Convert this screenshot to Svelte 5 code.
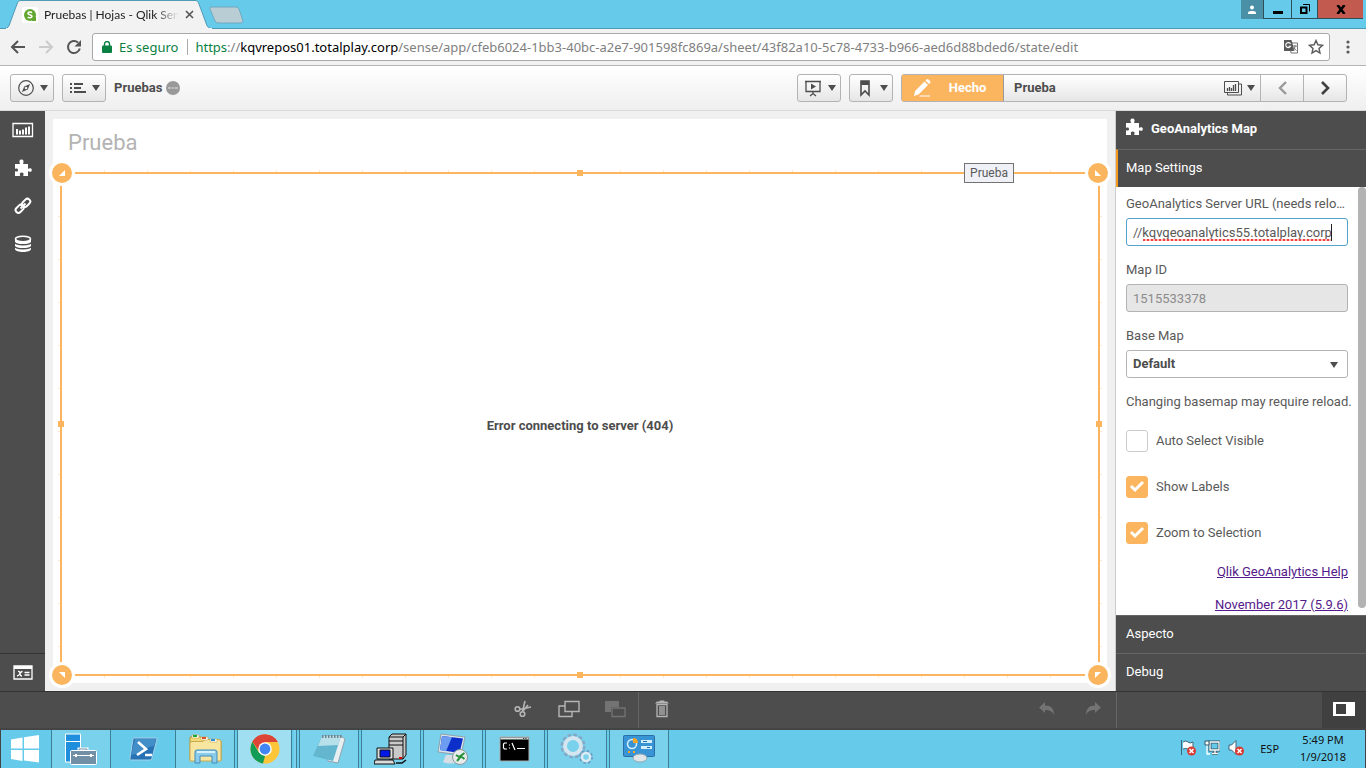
<script lang="ts">
  let serverUrl = '//kqvgeoanalytics55.totalplay.corp';
  let mapId = '1515533378';
  let baseMap = 'Default';

  let options = [
    { id: 'auto-select', label: 'Auto Select Visible', checked: false },
    { id: 'show-labels', label: 'Show Labels', checked: true },
    { id: 'zoom-selection', label: 'Zoom to Selection', checked: true }
  ];

  const assets = ['charts', 'puzzle', 'link', 'database'];
  const corners = ['tl', 'tr', 'bl', 'br'];
  const sides = ['top', 'right', 'bottom', 'left'];
  const apps = ['remote', 'rdp', 'cmd', 'gears', 'control'];
</script>

{#snippet caret()}
  <svg class="caret" width="8" height="6" viewBox="0 0 8 6"><path d="M0 0h8L4 6z" fill="#4d4d4d" /></svg>
{/snippet}

{#snippet puzzle()}
  <svg width="18" height="18" viewBox="0 0 18 18" fill="#fff">
    <path d="M1 5h4.500c.6 0 .6-.6.200-1.200C5 2.500 5.400.5 7.500.5s2.500 2 1.800 3.300C9 4.400 9 5 9.600 5H14v4.200c0 .7.600.7 1.100.300 1.100-.8 2.700-.3 2.700 1.500s-1.600 2.300-2.700 1.500c-.5-.4-1.100-.3-1.100.4V17H9.700c-.7 0-.6-.7-.3-1.200.6-1-.1-2.300-1.700-2.300s-2.300 1.300-1.700 2.300c.3.500.3 1.200-.4 1.200H1v-4.300c0-.6.500-.6 1-.3 1 .6 2-.2 2-1.400S3 9 2 9.600c-.5.300-1 .3-1-.3z" />
  </svg>
{/snippet}

{#snippet badge()}
  <circle cx="11.500" cy="12" r="4.500" fill="#d93a32" />
  <path d="M9.500 10l4 4M13.500 10l-4 4" stroke="#fff" stroke-width="1.500" />
{/snippet}

<div class="screen">
  <header class="titlebar">
    <div class="tab">
      <svg class="tab-shape" width="208" height="29" viewBox="0 0 208 29">
        <path d="M0 28.500C3 28.500 4 26 5 23L12 4C13 1.500 14 .5 16 .5H190c2 0 3 1 4 3.500l7 19c1 3 2 5.500 6 5.500z" fill="#f2f2f2" stroke="#4d9ab5" />
        <path d="M1 28.500h206" stroke="#f2f2f2" />
      </svg>
      <svg class="favicon" width="16" height="16" viewBox="0 0 16 16">
        <rect width="16" height="16" rx="2" fill="#fff" />
        <circle cx="8" cy="8" r="6" fill="#61a730" />
        <path d="M10 10h4v4h-4z" fill="#61a730" />
        <path d="M10 5.800C9.200 4.800 6 4.600 6 6.400c0 1.700 4 1 4 2.900 0 1.900-3.300 1.700-4.200.6" fill="none" stroke="#fff" stroke-width="1.600" />
      </svg>
      <span class="tab-title">Pruebas | Hojas - Qlik Sen</span>
      <button class="tab-close" aria-label="Cerrar pestaña">
        <svg width="9" height="9" viewBox="0 0 9 9"><path d="M1 1l7 7M8 1L1 8" stroke="#555" stroke-width="1.600" /></svg>
      </button>
    </div>
    <button class="new-tab" aria-label="Nueva pestaña">
      <svg width="36" height="18" viewBox="0 0 36 18"><path d="M3 1h25q2 0 3 2l4 12q0 2-2 2H10q-2 0-3-2L2 3q-1-2 1-2z" fill="#b9cdd5" stroke="#70a9bf" /></svg>
    </button>
    <div class="window-buttons">
      <button class="profile" aria-label="Perfil">
        <svg width="10" height="10" viewBox="0 0 10 10" fill="#fff"><circle cx="5" cy="2.500" r="2" /><path d="M1 9V7.500C1 5.500 9 5.500 9 7.500V9z" /></svg>
      </button>
      <button class="min" aria-label="Minimizar"><svg width="10" height="10" viewBox="0 0 10 10"><path d="M0 7h10v3H0z" /></svg></button>
      <button class="restore" aria-label="Restaurar">
        <svg width="10" height="10" viewBox="0 0 10 10" fill="none" stroke="#000"><path d="M1 3.500h5.500v5.500H1z" stroke-width="2" /><path d="M3 .5h6.500v7" /></svg>
      </button>
      <button class="close" aria-label="Cerrar">
        <svg width="10" height="9" viewBox="0 0 10 9"><path d="M1.500 0l7 9M8.500 0l-7 9" stroke="#000" stroke-width="2.600" /></svg>
      </button>
    </div>
  </header>

  <nav class="browser-bar">
    <button aria-label="Atrás">
      <svg width="16" height="16" viewBox="0 0 16 16" fill="none" stroke="#555" stroke-width="2"><path d="M15 8H2.500M8 2L2 8l6 6" /></svg>
    </button>
    <button aria-label="Adelante">
      <svg width="16" height="16" viewBox="0 0 16 16" fill="none" stroke="#ccc" stroke-width="2"><path d="M1 8h12.500M8 2l6 6-6 6" /></svg>
    </button>
    <button aria-label="Recargar">
      <svg width="16" height="16" viewBox="0 0 16 16"><path d="M13.800 9.500A6 6 0 1 1 12 3.600" fill="none" stroke="#555" stroke-width="2" /><path d="M15 1v6.500H8.500z" fill="#555" /></svg>
    </button>
    <div class="omnibox">
      <svg width="10" height="12" viewBox="0 0 10 12"><rect y="4.500" width="10" height="7.500" rx="1" fill="#0b8043" /><path d="M2.500 5V3a2.500 2.500 0 0 1 5 0v2" fill="none" stroke="#0b8043" stroke-width="1.400" /></svg>
      <span class="secure">Es seguro</span>
      <span class="url"><span class="scheme">https</span>://<span class="host">kqvrepos01.totalplay.corp</span>/sense/app/cfeb6024-1bb3-40bc-a2e7-901598fc869a/sheet/43f82a10-5c78-4733-b966-aed6d88bded6/state/edit</span>
      <button aria-label="Traducir">
        <svg width="16" height="16" viewBox="0 0 16 16">
          <path d="M7 4h7.500v10H8z" fill="#fff" stroke="#777" />
          <path d="M1 1h7.500l3 11H1z" fill="#5a5a5a" />
          <path d="M7.500 5A2.500 2.500 0 1 0 7.500 7.200H5.500" fill="none" stroke="#fff" stroke-width="1.100" />
          <path d="M10 7h4M12 6v1.500q-.5 3-2 4M11 8.500q1 2 2.500 3" fill="none" stroke="#777" />
        </svg>
      </button>
      <button aria-label="Agregar a favoritos">
        <svg width="16" height="16" viewBox="0 0 16 16"><path d="M8 1.500l1.900 4.300 4.600.5-3.500 3.100 1 4.600L8 11.600 4 14l1-4.600L1.500 6.300l4.600-.5z" fill="none" stroke="#5a5a5a" stroke-width="1.400" /></svg>
      </button>
    </div>
    <button class="more" aria-label="Menú">
      <svg width="4" height="14" viewBox="0 0 4 14" fill="#5a5a5a"><circle cx="2" cy="2" r="1.600" /><circle cx="2" cy="7" r="1.600" /><circle cx="2" cy="12" r="1.600" /></svg>
    </button>
  </nav>

  <div class="app-bar">
    <button class="tool" aria-label="Navegación">
      <svg width="16" height="16" viewBox="0 0 16 16"><circle cx="8" cy="8" r="7.300" fill="none" stroke="#4d4d4d" stroke-width="1.200" /><path d="M12 4L9.800 9.500 4 12l2.200-5.600z" fill="#4d4d4d" /><circle cx="8" cy="8" r="1.300" fill="#eee" /></svg>
      {@render caret()}
    </button>
    <button class="tool" aria-label="Menú global">
      <svg width="16" height="12" viewBox="0 0 16 12" fill="#4d4d4d"><path d="M0 1h2v2H0zM0 5h2v2H0zM0 9h2v2H0zM4 1h9v2H4zM4 5h7v2H4zM4 9h12v2H4z" /></svg>
      {@render caret()}
    </button>
    <div class="app-name">
      Pruebas
      <svg width="14" height="14" viewBox="0 0 14 14"><circle cx="7" cy="7" r="7" fill="#999" /><path d="M2 7h3M5.800 7h2.500M9 7h3" stroke="#e4e4e4" /></svg>
    </div>
    <button class="tool push" aria-label="Historias">
      <svg width="18" height="18" viewBox="0 0 18 18" fill="none" stroke="#4d4d4d" stroke-width="1.300"><path d="M1 2.500h16M2 2.500v10h14v-10M9 12.500V15M6 17l3-2.500 3 2.500" /><path d="M7 4.500l5 3-5 3z" fill="#4d4d4d" stroke="none" /></svg>
      {@render caret()}
    </button>
    <button class="tool" aria-label="Marcadores">
      <svg width="18" height="18" viewBox="0 0 18 18"><path d="M5 2h8v14l-4-4-4 4z" fill="none" stroke="#4d4d4d" stroke-width="1.600" /><path d="M5 2h8v4H5z" fill="#4d4d4d" /></svg>
      {@render caret()}
    </button>
    <div class="sheet-group">
      <button class="edit">
        <svg width="18" height="18" viewBox="0 0 18 18" fill="#fff"><path d="M2 12L11.500 2.500l3.500 3.500L5.500 15.500 1 17zM12.500 1.500L13.500.5q1-1 2 0L17 2q1 1 0 2l-1 1z" /><path d="M7 16.500h10v1H6z" /></svg>
        Hecho
      </button>
      <button class="sheet-name">
        <span>Prueba</span>
        <svg width="18" height="16" viewBox="0 0 18 16" fill="none" stroke="#4d4d4d"><path d="M.5 1.500h14v11H.5z" /><path d="M15 4h2.500v11h-14v-2" /><path d="M3.500 11V8M5.500 11V7M7.500 11V8M9.500 11V5M11.500 11V4" stroke-width="1.300" /></svg>
        {@render caret()}
      </button>
      <button class="step" aria-label="Hoja anterior"><svg width="9" height="14" viewBox="0 0 9 14"><path d="M8 1L2 7l6 6" fill="none" stroke="#999" stroke-width="2.400" /></svg></button>
      <button class="step" aria-label="Hoja siguiente"><svg width="9" height="14" viewBox="0 0 9 14"><path d="M1 1l6 6-6 6" fill="none" stroke="#404040" stroke-width="2.600" /></svg></button>
    </div>
  </div>

  <div class="workspace">
    <aside class="assets">
      {#each assets as asset}
        <button aria-label={asset}>
          {#if asset === 'charts'}
            <svg width="22" height="16" viewBox="0 0 22 16"><path d="M1 1.500h19.500v13H1z" fill="none" stroke="#fff" stroke-width="1.300" /><path d="M4 7h2v5.500H4zM7 8.500h2v4H7zM10 7.500h2v5h-2zM13 5.500h2v7h-2zM16 4.500h2v8h-2z" fill="#fff" /></svg>
          {:else if asset === 'puzzle'}
            {@render puzzle()}
          {:else if asset === 'link'}
            <svg width="18" height="18" viewBox="0 0 18 18" fill="none" stroke="#fff" stroke-width="2"><rect x="-4" y="-2.800" width="9" height="5.600" rx="2.800" transform="translate(5.300 12.200) rotate(-45)" /><rect x="-4.500" y="-2.800" width="9" height="5.600" rx="2.800" transform="translate(12.200 5.800) rotate(-45)" /><path d="M6.500 11.500l5-5" /></svg>
          {:else}
            <svg width="18" height="18" viewBox="0 0 18 18"><path d="M1 4v10c0 4 16 4 16 0V4z" fill="#fff" /><ellipse cx="9" cy="4" rx="7.500" ry="2.800" fill="#4d4d4d" stroke="#fff" stroke-width="1.600" /><path d="M1 7.500c1 3 15 3 16 0M1 11.500c1 3 15 3 16 0" fill="none" stroke="#4d4d4d" stroke-width="1.300" /></svg>
          {/if}
        </button>
      {/each}
      <button class="variables" aria-label="Variables">
        <svg width="20" height="15" viewBox="0 0 20 15"><path d="M1 1h18v13H1z" fill="none" stroke="#fff" stroke-width="1.300" /><path d="M1 1h18v3H1z" fill="#fff" /><path d="M5 6.500q2-.5 2 2t2 2.500M9.500 6.500q-1.500 0-2.500 2T4 11M11.500 7.500h5M11.500 10h5" fill="none" stroke="#fff" stroke-width="1.300" /></svg>
      </button>
    </aside>

    <main class="stage">
      <section class="sheet">
        <h1>Prueba</h1>
        <div class="frame">
          <p class="message">Error connecting to server (404)</p>
          <div class="ticks across"></div>
          <div class="ticks down"></div>
          {#each sides as side}
            <span class="grip {side}"></span>
          {/each}
          {#each corners as corner}
            <span class="corner {corner}"><svg width="6" height="6" viewBox="0 0 6 6"><path d="M6 0v6H0z" fill="#fff" /></svg></span>
          {/each}
          <span class="frame-label">Prueba</span>
        </div>
      </section>
    </main>

    <aside class="panel">
      <div class="panel-title">{@render puzzle()}GeoAnalytics Map</div>
      <button class="section open">Map Settings</button>
      <div class="settings">
        <div class="field">
          <label for="server-url">GeoAnalytics Server URL (needs reload)</label>
          <div class="control">
            <input id="server-url" class="focused" type="text" bind:value={serverUrl} spellcheck="false" />
            <span class="misspelled"></span>
          </div>
        </div>
        <div class="field">
          <label for="map-id">Map ID</label>
          <input id="map-id" type="text" value={mapId} disabled />
        </div>
        <div class="field">
          <label for="base-map">Base Map</label>
          <div class="control">
            <select id="base-map" bind:value={baseMap}>
              <option>Default</option>
            </select>
            {@render caret()}
          </div>
        </div>
        <p class="note">Changing basemap may require reload.</p>
        <div class="checks">
          {#each options as option}
            <label for={option.id}>
              <input id={option.id} type="checkbox" bind:checked={option.checked} />
              <svg class="tick" width="22" height="22" viewBox="0 0 22 22"><path d="M5 10l4 4 8-8" fill="none" stroke="#fff" stroke-width="3" /></svg>
              {option.label}
            </label>
          {/each}
        </div>
        <div class="links">
          <a href="#help">Qlik GeoAnalytics Help</a>
          <a href="#version">November 2017 (5.9.6)</a>
        </div>
        <span class="scroll-thumb"></span>
      </div>
      <button class="section">Aspecto</button>
      <button class="section">Debug</button>
    </aside>
  </div>

  <footer class="edit-bar">
    <div class="edit-tools">
      <span class="lead"></span>
      <button aria-label="Cortar">
        <svg width="18" height="18" viewBox="0 0 18 18" fill="none" stroke="#b5b5b5" stroke-width="1.600"><circle cx="3.500" cy="9" r="2.300" /><circle cx="8.500" cy="14" r="2.300" /><path d="M5.500 9.500L17 7M8.500 11.500L11 1M9 11l5-6" /></svg>
      </button>
      <button aria-label="Copiar">
        <svg width="22" height="18" viewBox="0 0 22 18" fill="none" stroke="#b5b5b5" stroke-width="1.400"><path d="M7 1.500h14v10H7z" /><path d="M7 6H1v10.500h13v-5" /></svg>
      </button>
      <button aria-label="Pegar">
        <svg width="22" height="18" viewBox="0 0 22 18"><path d="M1 1h14v6H7v5H1z" fill="#737373" /><path d="M8 8h13v8.500H8z" fill="none" stroke="#737373" stroke-width="1.300" /></svg>
      </button>
      <button class="divided" aria-label="Eliminar">
        <svg width="14" height="18" viewBox="0 0 14 18"><path d="M0 3.500L2 1.500h2.500L5 .5h4l.5 1H12l2 2z" fill="#b5b5b5" /><path d="M2 4.500v12h10v-12zM5 6v9M7 6v9M9 6v9" fill="none" stroke="#b5b5b5" stroke-width="1.300" /></svg>
      </button>
      <span class="trail"></span>
      <button aria-label="Deshacer">
        <svg width="16" height="14" viewBox="0 0 16 14"><path d="M6 0v3.500c6 0 9 3 9 9.500-1.500-3.500-4-5-9-5V11L0 5.500z" fill="#737373" /></svg>
      </button>
      <button aria-label="Rehacer">
        <svg width="16" height="14" viewBox="0 0 16 14"><path d="M10 0v3.500c-6 0-9 3-9 9.500 1.500-3.500 4-5 9-5V11l6-5.500z" fill="#737373" /></svg>
      </button>
    </div>
    <div class="panel-tools">
      <button aria-label="Mostrar propiedades">
        <svg width="22" height="14" viewBox="0 0 22 14"><path d="M0 0h22v14H0z" fill="#fff" /><path d="M3 2h10v10H3z" fill="#404040" /></svg>
      </button>
    </div>
  </footer>

  <div class="taskbar">
    <button class="start" aria-label="Inicio">
      <svg width="28" height="28" viewBox="0 0 28 28" fill="#fff"><path d="M0 4.500L11.500 2.500v11H0zM13 2.200L28 0v13.500H13zM0 15h11.500v11L0 24zM13 15h15v12.500L13 25.500z" /></svg>
    </button>
    <button class="app server" aria-label="Administrador del servidor">
      <svg width="32" height="32" viewBox="0 0 32 32"><path d="M.5 1h15v28H.5z" fill="#1f8fdd" stroke="#fff" /><path d="M0 8.500h16" stroke="#fff" /><path d="M14 18v-2h8v2" fill="none" stroke="#fff" stroke-width="3" /><path d="M14 18v-2h8v2" fill="none" stroke="#7190a6" /><rect x="5.500" y="17.500" width="26" height="14" rx="1" fill="#7190a6" stroke="#fff" /><path d="M8 22.500h21" stroke="#fff" /><path d="M11 21v3M26 21v3" stroke="#fff" stroke-width="2" /></svg>
    </button>
    <button class="pinned" aria-label="PowerShell">
      <svg width="30" height="26" viewBox="0 0 30 26"><path d="M6 2h22q1 0 1 1l-5 19q0 2-2 2H3q-2 0-1-2L5 3q0-1 1-1z" fill="#2672b4" stroke="#a7d2e9" /><path d="M7 3h21l-2 7q-8 1-14 7L3 19z" fill="#4d9ad0" opacity=".7" /><path d="M10 6l8 7-9 6M17 19h7" fill="none" stroke="#fff" stroke-width="2.600" /></svg>
    </button>
    <button class="app" aria-label="Explorador de archivos">
      <svg width="34" height="32" viewBox="0 0 34 32"><path d="M2 4h11l2 3h16q2 0 2 2v18H2z" fill="#f3d978" stroke="#b39436" /><path d="M2 10q0-1.500 2-1.500h11l2-2h14q2 0 2 2V28H2z" fill="#f7e5a0" stroke="#c7a94f" /><path d="M4 2h7v3H4zM13 4h7v3h-7zM22 6h7v3h-7z" fill="#fff" stroke="#c7a94f" stroke-width=".6" /><path d="M5 2h4v2H5z" fill="#18a830" /><path d="M14 4h4v2h-4z" fill="#d4502f" /><path d="M23 6h4v2h-4z" fill="#2f8edb" /><path d="M7 30V19q0-2 2-2h18q2 0 2 2v11h-5v-7H12v7z" fill="#8bccec" stroke="#408dba" /><path d="M9 19h18" stroke="#d7f1fc" stroke-width="2" /></svg>
    </button>
    <button class="app active" aria-label="Google Chrome">
      <svg width="30" height="30" viewBox="0 0 30 30"><circle cx="15" cy="15" r="14.500" fill="#fdc63a" /><path d="M2.400 7.800A14.500 14.500 0 0 1 27.600 7.800L15 8z" fill="#dc4437" /><path d="M2.400 7.800L9 18.500 15 22l-2 7.400A14.500 14.500 0 0 1 2.400 7.800z" fill="#119d58" /><path d="M2.400 7.800L9 17 15 8h12.600A14.500 14.500 0 0 0 2.400 7.800z" fill="#dc4437" /><path d="M15 29.500L21.500 18v-9h6.200A14.500 14.500 0 0 1 13 29.500z" fill="#fdc63a" /><circle cx="15" cy="15" r="6.800" fill="#fff" /><circle cx="15" cy="15" r="5.400" fill="#4285f4" /></svg>
    </button>
    <span class="stack"></span>
    <button class="app" aria-label="Bloc de notas">
      <svg width="34" height="30" viewBox="0 0 34 30"><path d="M12 2h17l4 3-7 24-10-2z" fill="#e8eff2" stroke="#8fa3ad" /><path d="M10 2h19l-8 25L1 22z" fill="#64b6ce" /><path d="M10 2h19l-3 9L6 12z" fill="#b7e0ea" /><path d="M10 2.500h20" stroke="#70838c" stroke-width="3" stroke-dasharray="1.500 1.500" /></svg>
    </button>
    {#each apps as app}
      <button class="app" aria-label={app}>
        {#if app === 'remote'}
          <svg width="34" height="32" viewBox="0 0 34 32" stroke="#111"><path d="M15 4l3-3h14v21l-3 4H15z" fill="#c9c9c9" /><path d="M15 4h14v22M29 4l3-3M15 8h14M15 12h14" fill="none" /><path d="M25 25h3" stroke="#e00000" stroke-width="2" /><path d="M3 15h16v11H3z" fill="#dcdcdc" /><path d="M6 17h10v7H6z" fill="#0018e8" /><path d="M1 27h18l2 4H0z" fill="#dcdcdc" /><path d="M22 30h6l4-3" fill="none" stroke-width="1.500" /></svg>
        {:else if app === 'rdp'}
          <svg width="32" height="32" viewBox="0 0 32 32"><path d="M4 1l24 3-4 18L1 19z" fill="#dce5ea" stroke="#8ba2af" /><path d="M5 3l21 2.500-3.500 14.500L3 17z" fill="#0c2fc9" /><path d="M5 3l10 1.200-6 14L3 17z" fill="#6d9df2" /><path d="M9 22h9l3 7q-8 3-15 0z" fill="#d6dee3" /><circle cx="23" cy="24" r="7.500" fill="#e7ebec" stroke="#8b979c" /><path d="M19 22l4 2.500-3 3.500M27.500 20l-4 3 4 3" fill="none" stroke="#25913a" stroke-width="2" /></svg>
        {:else if app === 'cmd'}
          <svg width="32" height="26" viewBox="0 0 32 26"><path d="M1 1h29v24H1z" fill="#000" stroke="#a8b0b3" /><path d="M1.500 1.500h28v2h-28z" fill="#d9dfe1" /><path d="M24 2.500h4" stroke="#444" stroke-dasharray="1 .7" /><path d="M8 7H5.500L4.500 8v4l1 1H8M10.500 8.500v1M10.500 11.500v1M13 7l3 7M18 12.500h8" fill="none" stroke="#fff" stroke-width="1.200" /></svg>
        {:else if app === 'gears'}
          <svg width="34" height="32" viewBox="0 0 34 32" fill="none"><circle cx="13" cy="13" r="10.500" stroke="#82a9c6" stroke-width="4" stroke-dasharray="3.500 2" /><circle cx="13" cy="13" r="8" stroke="#d6e6f1" stroke-width="4" /><circle cx="26" cy="24" r="5.500" stroke="#6d9bc0" stroke-width="3" stroke-dasharray="2.300 2" /><circle cx="26" cy="24" r="4" stroke="#dcebf4" stroke-width="2.500" /></svg>
        {:else}
          <svg width="32" height="28" viewBox="0 0 32 28"><rect x=".5" y=".5" width="31" height="21" rx="1" fill="#3994d6" stroke="#2a6fa8" /><circle cx="9" cy="9" r="4.500" fill="none" stroke="#d6efff" stroke-width="1.500" /><path d="M10 8V3q5 0 5 5z" fill="#f5a623" /><path d="M18 5h11v3H18zM18 11h11v3H18z" fill="#d6efff" /><path d="M20 6h4v1h-4zM24 12h3v1h-3z" fill="#1d6eb4" /><path d="M5 17h2M10 17h2" stroke="#f5a623" stroke-width="2" /><ellipse cx="17" cy="23" rx="7" ry="4" fill="#dfe6ea" stroke="#8fa6b3" /></svg>
        {/if}
      </button>
    {/each}
    <div class="tray">
      <svg width="16" height="18" viewBox="0 0 16 18"><path d="M1.500 1v15M3 3q3-2 5 0t5 0v7q-3 1-5 0t-5 0" fill="#fff" stroke="#3c6575" />{@render badge()}</svg>
      <svg width="16" height="18" viewBox="0 0 16 18"><path d="M6 3h9v8H6zM8 14.500h6M11 11v3" fill="#66caea" stroke="#2f5766" stroke-width="3" /><path d="M6 3h9v8H6zM8 14.500h6M11 11v3M3 6v9h3" fill="none" stroke="#fff" stroke-width="1.300" /><path d="M1 2h4v4H1z" fill="#fff" stroke="#2f5766" /></svg>
      <svg width="16" height="18" viewBox="0 0 16 18"><path d="M1 6h2.500L8 1.500v14L3.500 11H1z" fill="#fff" stroke="#3c6575" />{@render badge()}</svg>
      <span class="lang">ESP</span>
      <div class="clock"><span>5:49 PM</span><span>1/9/2018</span></div>
    </div>
  </div>
</div>

<style>
  :global(body) {
    margin: 0;
  }

  .screen {
    display: flex;
    flex-direction: column;
    min-height: 100vh;
    background: #f2f2f2;
    color: #595959;
    font-family: Roboto, 'Liberation Sans', sans-serif;
    font-size: 13px;
    line-height: 20px;
  }

  .screen :global(*) {
    box-sizing: border-box;
  }

  svg {
    display: block;
    flex: none;
  }

  button {
    display: flex;
    align-items: center;
    justify-content: center;
    padding: 0;
    border: none;
    background: none;
    color: inherit;
    font: inherit;
  }

  /* browser */
  .titlebar {
    display: flex;
    height: 29px;
    padding-left: 5px;
    background: #66caea;
    border-bottom: 1px solid #4d9ab5;
    font-family: Lato, 'Noto Sans', sans-serif;
    font-size: 12px;
  }

  .tab {
    position: relative;
    display: flex;
    align-items: center;
    gap: 6px;
    width: 203px;
    height: 29px;
    padding-left: 17px;
    color: #222;
  }

  .tab-shape {
    position: absolute;
    left: 0;
    top: 0;
  }

  .favicon,
  .tab-close {
    position: relative;
  }

  .tab-title {
    position: relative;
    width: 135px;
    white-space: nowrap;
    mask-image: linear-gradient(to right, #000 82%, transparent);
  }

  .new-tab {
    height: 29px;
  }

  .window-buttons {
    display: flex;
    height: 19px;
    margin-left: auto;
    padding-right: 3px;
  }

  .window-buttons button {
    border: 1px solid #2f4f5c;
    border-top: none;
    border-right: none;
  }

  .window-buttons .profile {
    width: 22px;
    border: none;
    background: #4990a6;
  }

  .min {
    width: 28px;
  }

  .restore {
    width: 26px;
  }

  .window-buttons .close {
    width: 46px;
    background: #c25a50;
  }

  .browser-bar {
    display: flex;
    align-items: center;
    gap: 12px;
    height: 37px;
    padding: 0 16px 0 10px;
    border-bottom: 1px solid #b4b4b4;
    font-family: 'Noto Sans', sans-serif;
  }

  .browser-bar > button {
    flex: none;
  }

  .browser-bar > .more {
    margin-left: 4px;
  }

  .omnibox {
    display: flex;
    flex: 1;
    align-items: center;
    min-width: 0;
    height: 28px;
    margin-left: -2px;
    padding: 0 5px 0 9px;
    background: #fff;
    border: 1px solid #a9a9a9;
    border-radius: 3px;
  }

  .secure {
    margin: 0 7px;
    padding-right: 9px;
    border-right: 1px solid #aaa;
    color: #0b8043;
    line-height: 16px;
    white-space: nowrap;
  }

  .url {
    flex: 1;
    overflow: hidden;
    color: #808080;
    white-space: nowrap;
  }

  .scheme {
    color: #0b8043;
  }

  .host {
    color: #000;
  }

  .omnibox button {
    margin-left: 9px;
  }

  /* qlik toolbar */
  .app-bar {
    display: flex;
    align-items: center;
    gap: 8px;
    height: 45px;
    padding: 0 19px 0 10px;
    background: linear-gradient(#fff, #efefef);
    border-bottom: 1px solid #d9d9d9;
    font-weight: bold;
  }

  .tool {
    gap: 6px;
    width: 44px;
    height: 28px;
    padding-left: 2px;
    background: linear-gradient(#fff, #e6e6e6);
    border: 1px solid #b3b3b3;
    border-radius: 3px;
  }

  .app-name {
    display: flex;
    align-items: center;
    gap: 4px;
    color: #4d4d4d;
  }

  .push {
    margin-left: auto;
  }

  .sheet-group {
    display: flex;
    height: 28px;
    background: linear-gradient(#fff, #e6e6e6);
    border: 1px solid #b3b3b3;
    border-radius: 3px;
    color: #4d4d4d;
  }

  .edit {
    gap: 18px;
    width: 102px;
    padding-right: 6px;
    background: #fab55e;
    border-right: 1px solid #999;
    color: #fff;
  }

  .sheet-name {
    gap: 5px;
    width: 256px;
    padding: 0 5px 0 10px;
  }

  .sheet-name span {
    flex: 1;
    text-align: left;
  }

  .step {
    width: 43px;
    border-left: 1px solid #b3b3b3;
  }

  /* workspace */
  .workspace {
    display: flex;
    flex: 1;
  }

  .assets {
    display: flex;
    flex-direction: column;
    width: 45px;
    background: #4d4d4d;
  }

  .assets button {
    height: 38px;
  }

  .assets .variables {
    margin-top: auto;
    border-top: 1px solid #333;
  }

  .stage {
    display: flex;
    flex: 1;
    min-width: 0;
    padding: 8px;
    background: #f0f0f0;
  }

  .sheet {
    display: flex;
    flex: 1;
    flex-direction: column;
    padding: 8px 7px 7px;
    background: #fff;
  }

  h1 {
    margin: 0 8px 13px;
    color: #b3b3b3;
    font-size: 22px;
    font-weight: normal;
    line-height: 32px;
  }

  .frame {
    position: relative;
    display: flex;
    flex: 1;
    align-items: center;
    justify-content: center;
    border: 2px solid #fab55e;
  }

  .message {
    margin: 4px 0 0;
    color: #4d4d4d;
    font-weight: bold;
  }

  .ticks {
    position: absolute;
    opacity: 0.3;
  }

  .across {
    inset: -4px 0;
    background:
      repeating-linear-gradient(to right, transparent 0 42px, #fab55e 42px 43px) top / 100% 2px no-repeat,
      repeating-linear-gradient(to right, transparent 0 42px, #fab55e 42px 43px) bottom / 100% 2px no-repeat;
  }

  .down {
    inset: 0 -4px;
    background:
      repeating-linear-gradient(to bottom, transparent 0 42px, #fab55e 42px 43px) left / 2px 100% no-repeat,
      repeating-linear-gradient(to bottom, transparent 0 42px, #fab55e 42px 43px) right / 2px 100% no-repeat;
  }

  .grip {
    position: absolute;
    width: 6px;
    height: 6px;
    background: #fab55e;
  }

  .grip.top,
  .grip.bottom {
    left: calc(50% - 3px);
  }

  .grip.left,
  .grip.right {
    top: calc(50% - 3px);
  }

  .grip.top {
    top: -4px;
  }

  .grip.bottom {
    bottom: -4px;
  }

  .grip.left {
    left: -4px;
  }

  .grip.right {
    right: -4px;
  }

  .corner {
    position: absolute;
    display: flex;
    align-items: center;
    justify-content: center;
    width: 26px;
    height: 26px;
    background: #fab55e;
    border: 3px solid #fff;
    border-radius: 50%;
  }

  .corner.tl {
    left: -13px;
    top: -14px;
  }

  .corner.tr {
    right: -13px;
    top: -14px;
  }

  .corner.bl {
    left: -13px;
    bottom: -14px;
  }

  .corner.br {
    right: -13px;
    bottom: -14px;
  }

  .tr svg {
    transform: scaleX(-1);
  }

  .bl svg {
    transform: scaleY(-1);
  }

  .br svg {
    transform: rotate(180deg);
  }

  .frame-label {
    position: absolute;
    top: -11px;
    right: 84px;
    padding: 0 5px;
    background: #f0f1f7;
    border: 1px solid #737373;
    font-size: 12px;
    line-height: 18px;
  }

  /* properties panel */
  .panel {
    display: flex;
    flex-direction: column;
    width: 251px;
    background: #4d4d4d;
    border-left: 1px solid #ccc;
    color: #fff;
  }

  .panel-title {
    display: flex;
    align-items: center;
    gap: 8px;
    height: 38px;
    padding: 0 0 2px 9px;
    font-weight: bold;
  }

  .panel-title svg {
    margin-bottom: 4px;
  }

  .section {
    justify-content: flex-start;
    height: 38px;
    padding: 0 0 2px 10px;
    border-top: 1px solid #666;
  }

  .section.open {
    padding-left: 8px;
    border-left: 2px solid #f8981d;
  }

  .settings {
    position: relative;
    display: flex;
    flex: 1;
    flex-direction: column;
    gap: 14px;
    padding: 7px 18px 0 10px;
    background: #fff;
    color: #595959;
  }

  .field {
    display: flex;
    flex-direction: column;
    gap: 4px;
  }

  .field label {
    overflow: hidden;
    text-overflow: ellipsis;
    white-space: nowrap;
  }

  .control {
    position: relative;
  }

  input[type='text'],
  select {
    display: block;
    width: 100%;
    height: 28px;
    margin: 0;
    padding: 0 6px;
    appearance: none;
    background: #fff;
    border: 1px solid #b3b3b3;
    border-radius: 3px;
    color: #595959;
    font: inherit;
  }

  select {
    color: #4d4d4d;
    font-weight: bold;
  }

  input.focused {
    border-color: #52a2cc;
  }

  input[type='text']:disabled {
    background: #e6e6e6;
    color: #8c8c8c;
  }

  .misspelled {
    position: absolute;
    left: 17px;
    top: 6px;
    width: 189px;
    height: 17px;
    background: repeating-linear-gradient(to right, #f04040 0 2px, #fbb 2px 4px) bottom / 100% 2px no-repeat;
    border-right: 1px solid #222;
    pointer-events: none;
  }

  .control .caret {
    position: absolute;
    right: 10px;
    top: 12px;
    pointer-events: none;
  }

  .note {
    margin: 0 0 3px;
    white-space: nowrap;
  }

  .checks {
    display: flex;
    flex-direction: column;
    gap: 22px;
  }

  .checks label {
    position: relative;
    display: flex;
    align-items: center;
    gap: 8px;
    height: 24px;
  }

  .checks input {
    width: 22px;
    height: 22px;
    margin: 0;
    appearance: none;
    background: #fff;
    border: 1px solid #ccc;
    border-radius: 3px;
  }

  .checks input:checked {
    background: #fab55e;
    border-color: #fab55e;
  }

  .tick {
    position: absolute;
    left: 0;
    top: 1px;
    pointer-events: none;
  }

  .links {
    display: flex;
    flex-direction: column;
    align-items: flex-end;
    gap: 13px;
    padding-top: 3px;
  }

  .links a {
    color: #551a8b;
  }

  .scroll-thumb {
    position: absolute;
    top: 0;
    right: 0;
    bottom: 7px;
    width: 8px;
    background: #b3b3b3;
    border-radius: 4px;
  }

  /* bottom toolbar */
  .edit-bar {
    display: flex;
    height: 37px;
    background: #4d4d4d;
    border-top: 1px solid #333;
  }

  .edit-tools {
    display: flex;
    flex: 1;
  }

  .edit-tools button {
    width: 46px;
    padding-bottom: 2px;
  }

  .edit-tools .divided {
    border-left: 1px solid #666;
  }

  .lead {
    flex: 25;
  }

  .trail {
    flex: 17;
  }

  .panel-tools {
    display: flex;
    justify-content: flex-end;
    width: 250px;
    border-left: 1px solid #666;
  }

  .panel-tools button {
    width: 44px;
    padding-bottom: 2px;
    background: #404040;
  }

  /* windows taskbar */
  .taskbar {
    display: flex;
    gap: 2px;
    height: 41px;
    background: #66caea;
    border: 1px solid #444;
    border-top-width: 2px;
    color: #111;
    font-family: 'Noto Sans', sans-serif;
    font-size: 11px;
    line-height: 17px;
  }

  .start {
    width: 48px;
  }

  .app {
    width: 60px;
    background: #79d1ec;
    border: solid #3d7f95;
    border-width: 0 1px;
  }

  .pinned {
    width: 60px;
  }

  .app.active {
    width: 55px;
    background: #a0def2;
  }

  .stack {
    width: 3px;
    background: #79d1ec;
    border-right: 1px solid #3d7f95;
  }

  .tray {
    display: flex;
    align-items: center;
    gap: 8px;
    margin-left: auto;
    padding: 0 19px 2px 0;
  }

  .lang {
    margin: 0 13px 0 8px;
  }

  .clock {
    display: flex;
    flex-direction: column;
    align-items: center;
  }
</style>
